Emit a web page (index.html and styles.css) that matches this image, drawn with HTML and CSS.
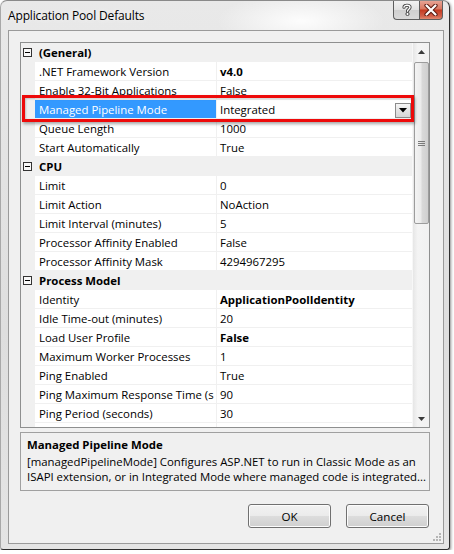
FILE: index.html
```html
<!DOCTYPE html>
<html>
<head>
<meta charset="utf-8">
<link rel="stylesheet" href="styles.css">
</head>
<body>
<div class="window">
  <div class="titlebar">
    <span class="title">Application Pool Defaults</span>
    <div class="caption-btns">
      <div class="cbtn help">
        <svg width="12" height="13" viewBox="0 0 12 13"><path d="M3 4.2 C3 1.6 9 1.6 9 4.3 C9 6.3 6.5 6.2 6.5 8.2" fill="none" stroke="#444" stroke-width="3.2" stroke-linecap="round"/><path d="M3 4.2 C3 1.6 9 1.6 9 4.3 C9 6.3 6.5 6.2 6.5 8.2" fill="none" stroke="#fff" stroke-width="1.4" stroke-linecap="round"/><circle cx="6.5" cy="11" r="1.6" fill="#fff" stroke="#444" stroke-width="1"/></svg>
      </div>
      <div class="cbtn close">
        <svg width="14" height="12" viewBox="0 0 14 12"><path d="M2.5 1.5 L11.5 10.5 M11.5 1.5 L2.5 10.5" stroke="#5a1a10" stroke-width="4.2" stroke-linecap="round"/><path d="M2.5 1.5 L11.5 10.5 M11.5 1.5 L2.5 10.5" stroke="#fff" stroke-width="2.2" stroke-linecap="round"/></svg>
      </div>
    </div>
  </div>
  <div class="client">
    <div class="grid">
      <div class="rows">
        <div class="row cat"><span class="gutter"><svg class="minus" width="9" height="9" viewBox="0 0 9 9"><rect x="0.5" y="0.5" width="8" height="8" fill="#f8f8f8" stroke="#333"/><path d="M2 4.5 H7" stroke="#000"/></svg></span><span class="catname">(General)</span></div>
        <div class="row"><span class="gutter"></span><span class="name">.NET Framework Version</span><span class="value bold">v4.0</span></div>
        <div class="row"><span class="gutter"></span><span class="name">Enable 32-Bit Applications</span><span class="value">False</span></div>
        <div class="row sel"><span class="gutter"></span><span class="name">Managed Pipeline Mode</span><span class="value">Integrated<span class="dd"><svg width="8" height="5" viewBox="0 0 8 5"><path d="M0 0 H8 L4 4.5 Z" fill="#000"/></svg></span></span></div>
        <div class="row"><span class="gutter"></span><span class="name">Queue Length</span><span class="value">1000</span></div>
        <div class="row"><span class="gutter"></span><span class="name">Start Automatically</span><span class="value">True</span></div>
        <div class="row cat"><span class="gutter"><svg class="minus" width="9" height="9" viewBox="0 0 9 9"><rect x="0.5" y="0.5" width="8" height="8" fill="#f8f8f8" stroke="#333"/><path d="M2 4.5 H7" stroke="#000"/></svg></span><span class="catname">CPU</span></div>
        <div class="row"><span class="gutter"></span><span class="name">Limit</span><span class="value">0</span></div>
        <div class="row"><span class="gutter"></span><span class="name">Limit Action</span><span class="value">NoAction</span></div>
        <div class="row"><span class="gutter"></span><span class="name">Limit Interval (minutes)</span><span class="value">5</span></div>
        <div class="row"><span class="gutter"></span><span class="name">Processor Affinity Enabled</span><span class="value">False</span></div>
        <div class="row"><span class="gutter"></span><span class="name">Processor Affinity Mask</span><span class="value">4294967295</span></div>
        <div class="row cat"><span class="gutter"><svg class="minus" width="9" height="9" viewBox="0 0 9 9"><rect x="0.5" y="0.5" width="8" height="8" fill="#f8f8f8" stroke="#333"/><path d="M2 4.5 H7" stroke="#000"/></svg></span><span class="catname">Process Model</span></div>
        <div class="row"><span class="gutter"></span><span class="name">Identity</span><span class="value bold">ApplicationPoolIdentity</span></div>
        <div class="row"><span class="gutter"></span><span class="name">Idle Time-out (minutes)</span><span class="value">20</span></div>
        <div class="row"><span class="gutter"></span><span class="name">Load User Profile</span><span class="value bold">False</span></div>
        <div class="row"><span class="gutter"></span><span class="name">Maximum Worker Processes</span><span class="value">1</span></div>
        <div class="row"><span class="gutter"></span><span class="name">Ping Enabled</span><span class="value">True</span></div>
        <div class="row"><span class="gutter"></span><span class="name">Ping Maximum Response Time (s</span><span class="value">90</span></div>
        <div class="row"><span class="gutter"></span><span class="name">Ping Period (seconds)</span><span class="value">30</span></div>
        <div class="row"><span class="gutter"></span><span class="name">&nbsp;</span><span class="value">&nbsp;</span></div>
      </div>
      <div class="scrollbar">
        <div class="sb-btn"><svg width="7" height="4" viewBox="0 0 7 4"><path d="M0 4 L3.5 0 L7 4 Z" fill="#3a3a3a"/></svg></div>
        <div class="thumb"><svg width="7" height="5" viewBox="0 0 7 5"><path d="M0 0.5 H7 M0 2.5 H7 M0 4.5 H7" stroke="#7a7a7a"/></svg></div>
        <div class="track"></div>
        <div class="sb-btn"><svg width="7" height="4" viewBox="0 0 7 4"><path d="M0 0 L7 0 L3.5 4 Z" fill="#3a3a3a"/></svg></div>
      </div>
      <div class="highlight"></div>
    </div>
    <div class="desc">
      <div class="desc-title">Managed Pipeline Mode</div>
      <div class="desc-text">[managedPipelineMode] Configures ASP.NET to run in Classic Mode as an<br>ISAPI extension, or in Integrated Mode where managed code is integrated...</div>
    </div>
    <div class="buttons">
      <button class="btn ok">OK</button>
      <button class="btn">Cancel</button>
    </div>
    <svg class="grip" width="9" height="9" viewBox="0 0 9 9"><g fill="#b5b5b5"><rect x="7" y="1" width="2" height="2"/><rect x="4" y="4" width="2" height="2"/><rect x="7" y="4" width="2" height="2"/><rect x="1" y="7" width="2" height="2"/><rect x="4" y="7" width="2" height="2"/><rect x="7" y="7" width="2" height="2"/></g></svg>
  </div>
</div>
</body>
</html>
```

FILE: styles.css
```css
html, body {
  margin: 0;
  padding: 0;
  background: #ffffff;
}
body {
  font-family: "Segoe UI", "Open Sans", "DejaVu Sans", sans-serif;
  font-size: 11.4px;
  color: #000;
}
.window {
  width: 450px;
  height: 550px;
  box-sizing: border-box;
  border: 1px solid;
  border-color: #8a8a8a #2e2e2e #2e2e2e #a8a8a8;
  border-radius: 7px 7px 3px 3px;
  background:
    radial-gradient(ellipse 120px 40px at 300px 20px, rgba(255,255,255,0.9), rgba(255,255,255,0) 70%),
    linear-gradient(to bottom, #e9e9e9, #dedede 60%, #e4e4e4);
  box-shadow: 1px 1px 3px rgba(0,0,0,0.45);
  display: flex;
  flex-direction: column;
  overflow: hidden;
}
.titlebar {
  height: 29px;
  display: flex;
  align-items: flex-start;
  justify-content: space-between;
  flex: none;
}
.title {
  margin-left: 7px;
  margin-top: 7px;
  font-size: 12px;
  line-height: 16px;
  color: #000;
  letter-spacing: -0.15px;
  text-shadow: 0 0 6px rgba(255,255,255,0.9);
}
.caption-btns {
  display: flex;
  margin-right: 6px;
  margin-top: -1px;
}
.cbtn {
  height: 20px;
  box-sizing: border-box;
  border: 1px solid #5d5d5d;
  border-top: none;
  display: flex;
  align-items: center;
  justify-content: center;
}
.help {
  width: 26px;
  border-radius: 0 0 0 4px;
  border-right: none;
  background: linear-gradient(to bottom, #f4f4f4, #e2e2e2 50%, #cfcfcf 52%, #d9d9d9);
}
.close {
  width: 24px;
  border-radius: 0 0 4px 0;
  background: linear-gradient(to bottom, #e9a99b, #d9765f 48%, #c4391f 52%, #d2604a 85%, #e08a70);
}
.client {
  flex: 1;
  margin: 0 5px 5px 7px;
  border: 1px solid #9a9a9a;
  background: #f0f0f0;
  padding: 11px 13px 15px 11px;
  display: flex;
  flex-direction: column;
  position: relative;
}
.grid {
  height: 386px;
  box-sizing: border-box;
  border: 1px solid #8e8f8f;
  background: #ffffff;
  display: flex;
  position: relative;
  flex: none;
}
.rows {
  flex: 1;
  overflow: hidden;
}
.row {
  height: 19px;
  display: flex;
  white-space: nowrap;
}
.gutter {
  width: 14px;
  flex: none;
  background: #f0f0f0;
  position: relative;
}
.name {
  width: 177px;
  flex: none;
  padding-left: 4px;
  padding-top: 1px;
  height: 17px;
  line-height: 17px;
  border-bottom: 1px solid #f0f0f0;
  border-right: 1px solid #f0f0f0;
  overflow: hidden;
}
.value {
  flex: 1;
  padding-left: 3px;
  padding-top: 1px;
  height: 17px;
  line-height: 17px;
  border-bottom: 1px solid #f0f0f0;
  position: relative;
  overflow: hidden;
}
.bold {
  font-weight: bold;
}
.row.cat {
  background: #f0f0f0;
}
.minus {
  position: absolute;
  left: 2px;
  top: 5px;
}
.catname {
  padding-left: 4px;
  padding-top: 1px;
  line-height: 17px;
  font-weight: bold;
}
.row.sel .name {
  background: #3399ff;
  color: #fff;
}
.dd {
  position: absolute;
  right: 1px;
  top: 3px;
  width: 16px;
  height: 15px;
  box-sizing: border-box;
  border: 1px solid #8b8b8b;
  background: linear-gradient(to bottom, #f6f6f6, #e4e4e4 50%, #d6d6d6);
  display: flex;
  align-items: center;
  justify-content: center;
}
.scrollbar {
  width: 17px;
  flex: none;
  background: linear-gradient(to right, #e6e6e6, #f4f4f4 30%, #f1f1f1);
  display: flex;
  flex-direction: column;
  border-left: 1px solid #f7f7f7;
  box-sizing: border-box;
}
.sb-btn {
  height: 17px;
  display: flex;
  align-items: center;
  justify-content: center;
  flex: none;
}
.thumb {
  height: 162px;
  margin: 2px 0 0 1px;
  box-sizing: border-box;
  border: 1px solid #9c9c9c;
  border-radius: 2px;
  background: linear-gradient(to right, #f3f3f3, #ebebeb 45%, #d9d9d9 55%, #cfcfcf);
  display: flex;
  align-items: center;
  justify-content: center;
  flex: none;
}
.track {
  flex: 1;
}
.highlight {
  position: absolute;
  left: 1px;
  top: 52px;
  width: 392px;
  height: 27px;
  box-sizing: border-box;
  border: 3px solid #ee0a0a;
  box-shadow: 1px 2px 3px rgba(0,0,0,0.35), inset 1px 1px 2px rgba(0,0,0,0.2);
  pointer-events: none;
}
.desc {
  margin-top: 4px;
  height: 59px;
  box-sizing: border-box;
  border: 1px solid #a0a0a0;
  background: #f0f0f0;
  padding: 3px 6px 0 6px;
  flex: none;
}
.desc-title {
  font-weight: bold;
  line-height: 17px;
  margin-bottom: 1px;
}
.desc-text {
  line-height: 15px;
  white-space: nowrap;
}
.buttons {
  margin-top: 13px;
  display: flex;
  justify-content: flex-end;
  gap: 15px;
  padding-right: 1px;
  flex: none;
}
.btn {
  width: 83px;
  height: 24px;
  box-sizing: border-box;
  border: 1px solid #707070;
  border-radius: 3px;
  background: linear-gradient(to bottom, #f2f2f2, #ebebeb 50%, #dddddd 51%, #cfcfcf);
  box-shadow: inset 0 0 0 1px #fcfcfc;
  font-family: "Segoe UI", "Open Sans", "DejaVu Sans", sans-serif;
  font-size: 11.6px;
  color: #000;
  padding: 0;
}
.grip {
  position: absolute;
  right: 2px;
  bottom: 2px;
}
```
